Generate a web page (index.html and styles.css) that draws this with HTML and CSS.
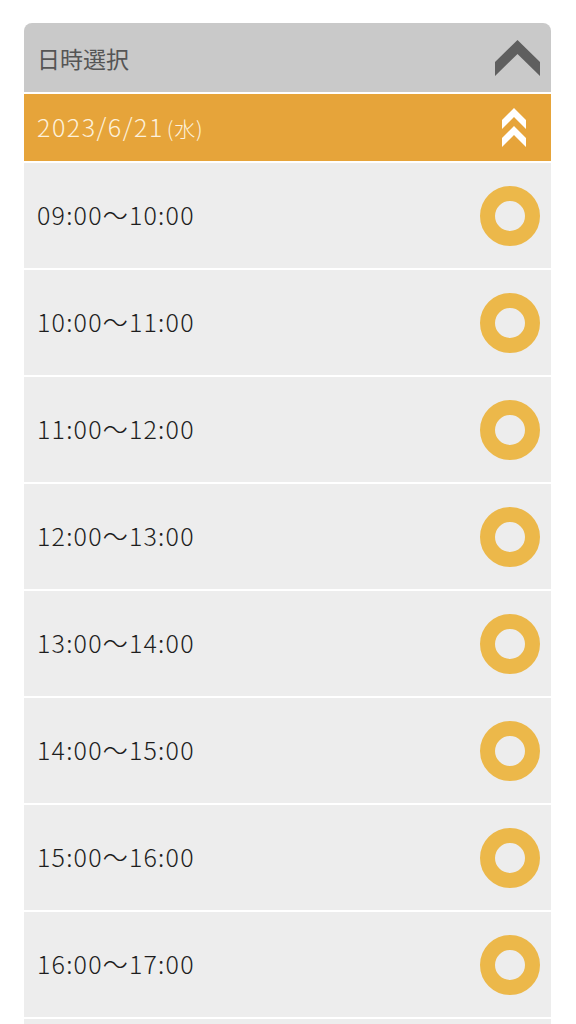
FILE: index.html
```html
<!DOCTYPE html>
<html lang="ja">
<head>
    <meta charset="UTF-8">
    <meta name="viewport" content="width=device-width, initial-scale=1.0">
    <title>日時選択</title>
    <link rel="stylesheet" href="styles.css">
</head>
<body>
    <section class="picker">
        <div class="picker-head">
            <span>日時選択</span>
            <svg class="chevron" width="45" height="36" viewBox="0 0 45 36">
                <polygon points="22.5,0 45,22 45,36 22.5,14 0,36 0,22" fill="#5f5f5f"/>
            </svg>
        </div>
        <div class="date-bar">
            <span>2023/6/21<small>(水)</small></span>
            <svg class="double-chevron" width="24" height="39" viewBox="0 0 24 39">
                <polygon points="12,0 24,12 24,21 12,9 0,21 0,12" fill="#fff"/>
                <polygon points="12,18 24,30 24,39 12,27 0,39 0,30" fill="#fff"/>
            </svg>
        </div>
        <ul class="slots">
            <li><span>09:00〜10:00</span><i class="ok"></i></li>
            <li><span>10:00〜11:00</span><i class="ok"></i></li>
            <li><span>11:00〜12:00</span><i class="ok"></i></li>
            <li><span>12:00〜13:00</span><i class="ok"></i></li>
            <li><span>13:00〜14:00</span><i class="ok"></i></li>
            <li><span>14:00〜15:00</span><i class="ok"></i></li>
            <li><span>15:00〜16:00</span><i class="ok"></i></li>
            <li><span>16:00〜17:00</span><i class="ok"></i></li>
            <li class="last"><i class="ok"></i></li>
        </ul>
    </section>
</body>
</html>
```

FILE: styles.css
```css
body {
    margin: 0;
    background-color: #fff;
    font-family: "Noto Sans CJK JP", "Noto Sans", sans-serif;
}

.picker {
    margin: 23px 25px 0 24px;
    display: flex;
    flex-direction: column;
    gap: 2px;
}

.picker-head {
    height: 69px;
    padding: 0 11px 0 13px;
    display: flex;
    align-items: center;
    justify-content: space-between;
    background-color: #c9c9c9;
    border-radius: 8px 8px 0 0;
    color: #555;
    font-size: 23px;
}

.date-bar {
    height: 67px;
    padding: 0 25px 0 13px;
    display: flex;
    align-items: center;
    justify-content: space-between;
    background-color: #e6a43a;
    color: #fdf1dc;
    font-size: 25px;
    font-weight: 300;
    letter-spacing: 1.5px;
}

.date-bar span {
    margin-top: -4px;
}

.date-bar small {
    margin-left: 3px;
    font-size: 21px;
    letter-spacing: 0.8px;
}

.slots {
    margin: 0;
    padding: 0;
    list-style: none;
    display: flex;
    flex-direction: column;
    gap: 2px;
}

.slots li {
    height: 105px;
    padding: 0 11px 0 13px;
    display: flex;
    align-items: center;
    justify-content: space-between;
    background-color: #ededed;
    color: #1e1e1e;
    font-size: 25px;
    font-weight: 300;
    letter-spacing: 1.2px;
}

.slots li span {
    margin-top: -3px;
}

.slots li.last {
    justify-content: flex-end;
}

.ok {
    width: 30px;
    height: 30px;
    border: 15px solid #ecb84a;
    border-radius: 50%;
}
```
